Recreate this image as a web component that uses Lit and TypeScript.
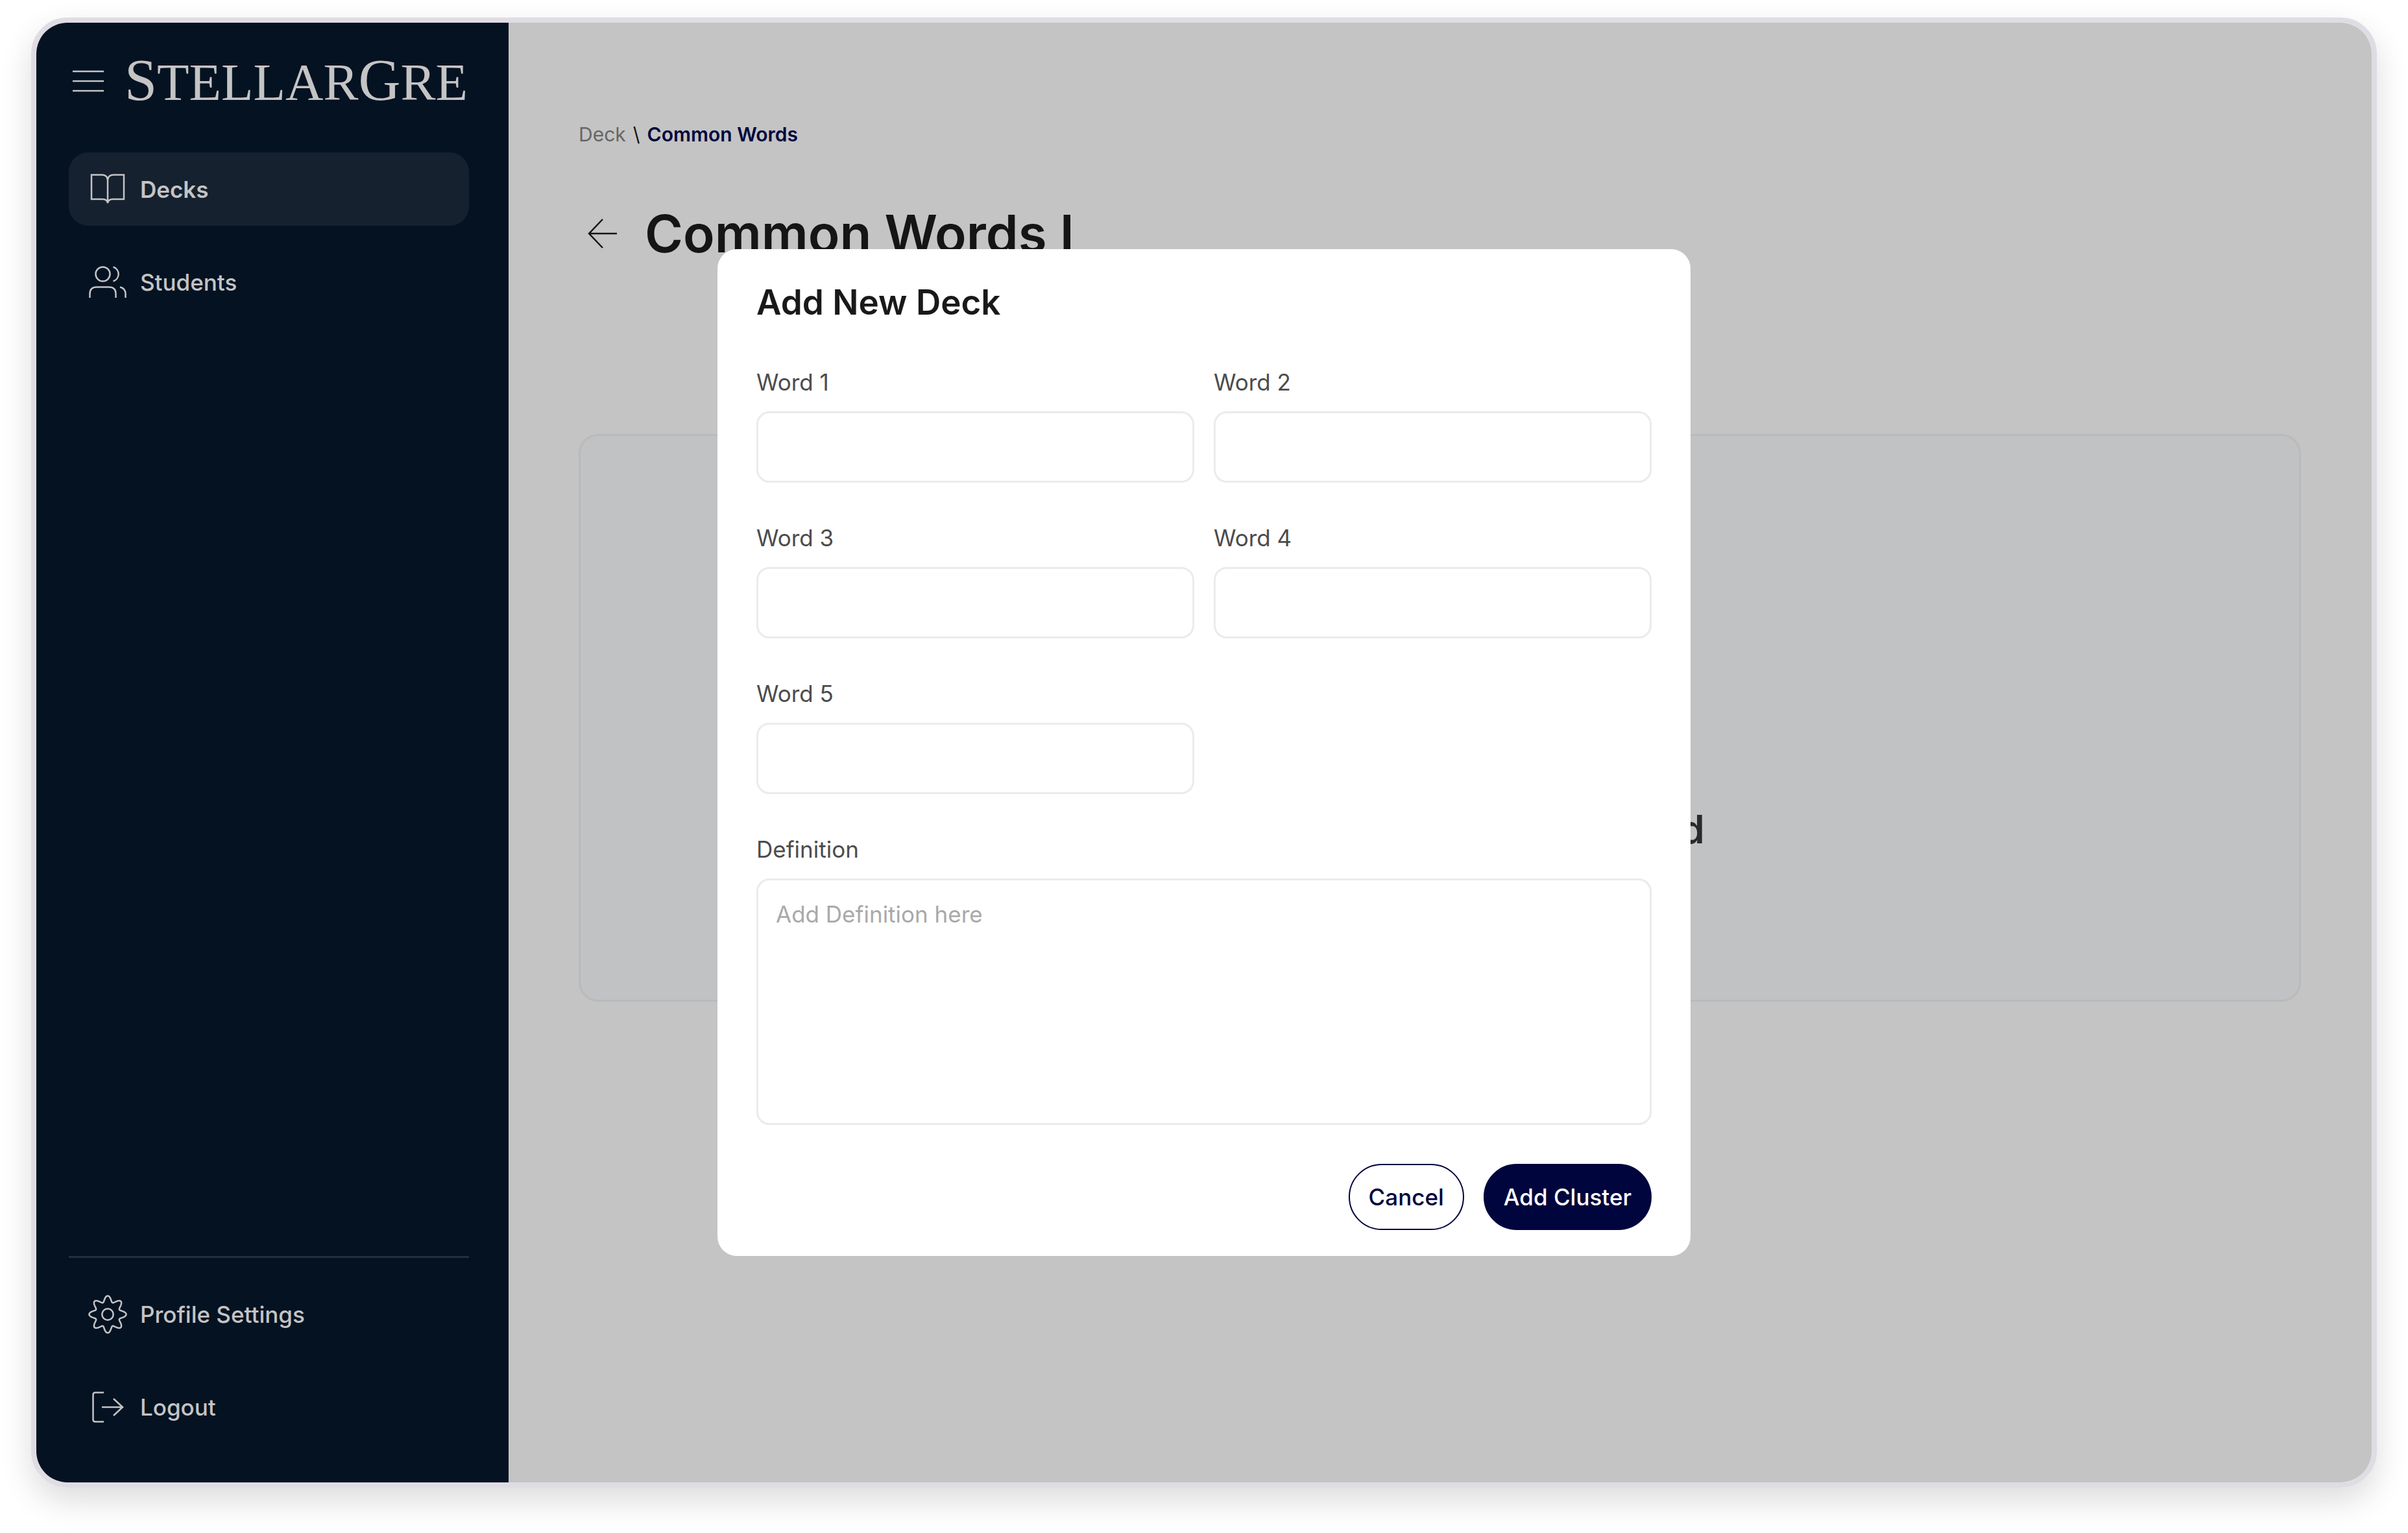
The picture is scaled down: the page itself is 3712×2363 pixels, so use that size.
import { LitElement, html, css, svg } from "lit";
import { customElement, property } from "lit/decorators.js";

// Eight-lobed gear outline around the centre of a 60-unit box.
const gearOutline = (): string => {
  const steps = 192;
  const points: string[] = [];
  for (let i = 0; i < steps; i++) {
    const a = (i / steps) * Math.PI * 2;
    const r = 24 + 4.6 * Math.cos(8 * a);
    points.push(`${(30 + r * Math.cos(a)).toFixed(2)} ${(30 + r * Math.sin(a)).toFixed(2)}`);
  }
  return `M${points.join("L")}Z`;
};

const ICONS: Record<string, unknown> = {
  menu: svg`<path d="M6 15H54M6 30H54M6 45H54" />`,
  book: svg`<path d="M30 50V15Q29 7.5 21 7.5H5V45H22Q29 45 30 51Q31 45 38 45H55V7.5H39Q31 7.5 30 15" />`,
  users: svg`<circle cx="22.5" cy="17.5" r="11" /><path d="M2.5 54V48Q2.5 37.5 13 37.5H32Q42.5 37.5 42.5 48V54M38.5 6.5A11.5 11.5 0 0 1 38.5 28.5M49 37.5Q57.500 39.500 57.5 48V54" />`,
  gear: svg`<circle cx="30" cy="30" r="8.7" /><path d=${gearOutline()} />`,
  logout: svg`<path d="M24 7.5H11Q7.500 7.500 7.5 11V49Q7.500 52.500 11 52.5H24M21 30H53M39 17L53 30L39 43" />`,
  back: svg`<path d="M52 30H9M30 8L9 30L30 52" />`,
};

@customElement("app-icon")
export class AppIcon extends LitElement {
  @property() name = "menu";
  static styles = css`
    :host { display: block; width: 60px; height: 60px; flex: none; }
    .glyph { display: block; width: 100%; height: 100%; overflow: visible; fill: none; stroke: currentColor; stroke-width: 2.5; }
  `;
  render() {
    return html`<svg class="glyph" viewBox="0 0 60 60" aria-hidden="true">${ICONS[this.name]}</svg>`;
  }
}

@customElement("app-sidebar")
export class AppSidebar extends LitElement {
  static styles = css`
    :host { display: flex; flex-direction: column; box-sizing: border-box; width: 728px; flex: none; padding: 50px 61px 60px 50px; background: #051222; color: #c4c4c4; }
    .brand { display: flex; align-items: center; gap: 26px; height: 80px; margin-bottom: 70px; }
    .menu { display: block; padding: 0; border: 0; background: none; color: inherit; }
    .wordmark { font: 81px/80px "Liberation Serif", serif; white-space: nowrap; }
    .cap { font-size: 90px; }
    .nav { display: flex; flex-direction: column; gap: 30px; }
    .foot { margin-top: auto; padding-top: 30px; border-top: 3px solid #232f3d; }
    .item { display: flex; align-items: center; gap: 20px; height: 113px; padding: 0 30px; border-radius: 30px; color: inherit; text-decoration: none; font-size: 35px; font-weight: 500; }
    .active { background: #15212f; font-weight: 600; }
  `;
  render() {
    return html`
      <div class="brand">
        <button class="menu" aria-label="Menu"><app-icon name="menu"></app-icon></button>
        <span class="wordmark"><span class="cap">S</span>TELLAR<span class="cap">G</span>RE</span>
      </div>
      <nav class="nav">
        <a class="item active" href="#decks"><app-icon name="book"></app-icon>Decks</a>
        <a class="item" href="#students"><app-icon name="users"></app-icon>Students</a>
      </nav>
      <nav class="nav foot">
        <a class="item" href="#profile"><app-icon name="gear"></app-icon>Profile Settings</a>
        <a class="item" href="#logout"><app-icon name="logout"></app-icon>Logout</a>
      </nav>
    `;
  }
}

@customElement("deck-dialog")
export class DeckDialog extends LitElement {
  static styles = css`
    :host { display: block; box-sizing: border-box; width: 1500px; padding: 50px 60px 40px; border-radius: 30px; background: #fff; }
    .title { margin: 0 0 65px; font-size: 53px; line-height: 65px; font-weight: 600; color: #19191b; }
    .fields { display: grid; grid-template-columns: 1fr 1fr; gap: 60px 30px; }
    .field { display: flex; flex-direction: column; gap: 20px; }
    .wide { grid-column: 1 / -1; }
    .label { font-size: 35px; line-height: 50px; color: #4c4c4c; }
    .box { display: block; box-sizing: border-box; width: 100%; height: 110px; margin: 0; padding: 27px; border: 3px solid #ebebeb; border-radius: 20px; background: #fff; font: inherit; font-size: 35px; line-height: 50px; color: #19191b; resize: none; outline: 0; }
    .area { height: 380px; }
    .box::placeholder { color: #a9a9a9; opacity: 1; }
    .actions { display: flex; justify-content: flex-end; gap: 30px; margin-top: 60px; }
    .button { height: 102px; padding: 0 29px; border: 2px solid #00053d; border-radius: 51px; background: #fff; color: #00053d; font: inherit; font-size: 35px; font-weight: 500; }
    .primary { background: #00053d; color: #fff; }
  `;
  render() {
    return html`
      <h2 class="title">Add New Deck</h2>
      <form @submit=${(e: Event) => e.preventDefault()}>
        <div class="fields">
          ${[1, 2, 3, 4, 5].map(
            (n) => html`<div class="field">
              <label class="label" for="word-${n}">Word ${n}</label>
              <input class="box" id="word-${n}" type="text" />
            </div>`
          )}
          <div class="field wide">
            <label class="label" for="definition">Definition</label>
            <textarea class="box area" id="definition" placeholder="Add Definition here"></textarea>
          </div>
        </div>
        <div class="actions">
          <button class="button" type="button">Cancel</button>
          <button class="button primary" type="submit">Add Cluster</button>
        </div>
      </form>
    `;
  }
}

@customElement("app-root")
export class AppRoot extends LitElement {
  static styles = css`
    :host { display: flex; box-sizing: border-box; min-height: 100vh; padding: 27px 48px 70px; background: #fff; font-family: Inter, "Liberation Sans", sans-serif; }
    .window { position: relative; display: flex; flex: 1; box-sizing: border-box; border: 8px solid #dfdce3; border-radius: 56px; overflow: hidden; }
    .shadow { display: flex; flex: 1; border-radius: 56px; box-shadow: 0 20px 50px rgba(0, 0, 0, 0.14); }
    .main { flex: 1; padding: 150px 109px 0 108px; background: #c4c4c4; color: #151515; }
    .crumbs { display: flex; gap: 11px; font-size: 30px; line-height: 44px; }
    .crumb { color: #666; text-decoration: none; }
    .current { color: #00053d; font-weight: 600; }
    .heading { display: flex; align-items: center; gap: 35px; margin: 81px 0 259px 7px; }
    .back { display: block; padding: 0; border: 0; background: none; color: #151515; }
    .title { margin: 0; font-size: 80px; line-height: 100px; font-weight: 600; }
    .empty { display: flex; justify-content: center; box-sizing: border-box; height: 875px; padding-top: 569px; border: 3px solid #b9babc; border-radius: 30px; background: #c1c2c4; color: #2a2a2a; font-size: 60px; line-height: 75px; font-weight: 600; }
    .overlay { position: absolute; inset: 0; display: flex; align-items: center; justify-content: center; }
  `;
  render() {
    return html`
      <div class="shadow">
        <div class="window">
          <app-sidebar></app-sidebar>
          <main class="main">
            <nav class="crumbs">
              <a class="crumb" href="#deck">Deck</a><span>\\</span><span class="current">Common Words</span>
            </nav>
            <div class="heading">
              <button class="back" aria-label="Back"><app-icon name="back"></app-icon></button>
              <h1 class="title">Common Words I</h1>
            </div>
            <section class="empty">No Clusters has been added</section>
          </main>
          <div class="overlay"><deck-dialog role="dialog" aria-label="Add New Deck"></deck-dialog></div>
        </div>
      </div>
    `;
  }
}
